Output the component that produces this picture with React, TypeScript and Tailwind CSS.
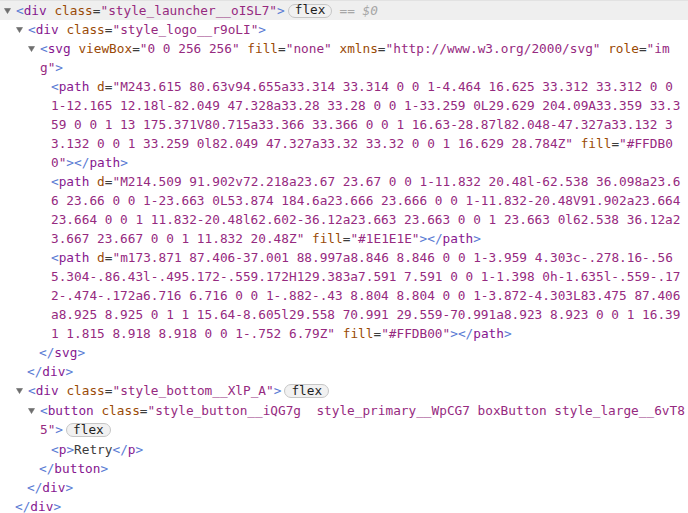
type Kind = "b" | "t" | "a" | "v" | "p";
type Tok = [string, Kind];

const color: Record<Kind, string> = {
  b: "text-[#5a7bd4]",
  t: "text-[#86178f]",
  a: "text-[#9a4a06]",
  v: "text-[#962a7f]",
  p: "text-[#3c3c3c]",
};

type Row = {
  x: number;
  toks: Tok[];
  arrow?: boolean;
  badge?: boolean;
  selected?: boolean;
  tall?: boolean;
};

const open = (tag: string, attrs: [string, string][], end = true): Tok[] => {
  const out: Tok[] = [["<", "b"], [tag, "t"]];
  attrs.forEach(([n, v]) => {
    out.push([" ", "p"], [n, "a"], ["=", "p"], [`"${v}"`, "v"]);
  });
  if (end) out.push([">", "b"]);
  return out;
};

const close = (tag: string): Tok[] => [
  ["</", "b"],
  [tag, "t"],
  [">", "b"],
];

const rows: Row[] = [
  { x: 16, arrow: true, badge: true, selected: true, tall: true, toks: open("div", [["class", "style_launcher__oISL7"]]) },
  { x: 28, arrow: true, toks: open("div", [["class", "style_logo__r9oLI"]]) },
  {
    x: 40,
    arrow: true,
    toks: [
      ["<", "b"],
      ["svg", "t"],
      [" ", "p"],
      ["viewBox", "a"],
      ["=", "p"],
      ['"0 0 256 256"', "v"],
      [" ", "p"],
      ["fill", "a"],
      ["=", "p"],
      ['"none"', "v"],
      [" ", "p"],
      ["xmlns", "a"],
      ["=", "p"],
      ['"http://www.w3.org/2000/svg"', "v"],
      [" ", "p"],
      ["role", "a"],
      ["=", "p"],
      ['"im', "v"],
    ],
  },
  { x: 40, toks: [['g"', "v"], [">", "b"]] },
  {
    x: 51,
    toks: [
      ["<", "b"],
      ["path", "t"],
      [" ", "p"],
      ["d", "a"],
      ["=", "p"],
      ['"M243.615 80.63v94.655a33.314 33.314 0 0 1-4.464 16.625 33.312 33.312 0 0', "v"],
    ],
  },
  { x: 51, toks: [["1-12.165 12.18l-82.049 47.328a33.28 33.28 0 0 1-33.259 0L29.629 204.09A33.359 33.3", "v"]] },
  { x: 51, toks: [["59 0 0 1 13 175.371V80.715a33.366 33.366 0 0 1 16.63-28.87l82.048-47.327a33.132 3", "v"]] },
  {
    x: 51,
    toks: [
      ['3.132 0 0 1 33.259 0l82.049 47.327a33.32 33.32 0 0 1 16.629 28.784Z"', "v"],
      [" ", "p"],
      ["fill", "a"],
      ["=", "p"],
      ['"#FFDB0', "v"],
    ],
  },
  { x: 51, toks: [['0"', "v"], [">", "b"], ...close("path")] },
  {
    x: 51,
    toks: [
      ["<", "b"],
      ["path", "t"],
      [" ", "p"],
      ["d", "a"],
      ["=", "p"],
      ['"M214.509 91.902v72.218a23.67 23.67 0 0 1-11.832 20.48l-62.538 36.098a23.6', "v"],
    ],
  },
  { x: 51, toks: [["6 23.66 0 0 1-23.663 0L53.874 184.6a23.666 23.666 0 0 1-11.832-20.48V91.902a23.664", "v"]] },
  { x: 51, toks: [["23.664 0 0 1 11.832-20.48l62.602-36.12a23.663 23.663 0 0 1 23.663 0l62.538 36.12a2", "v"]] },
  {
    x: 51,
    toks: [
      ['3.667 23.667 0 0 1 11.832 20.48Z"', "v"],
      [" ", "p"],
      ["fill", "a"],
      ["=", "p"],
      ['"#1E1E1E"', "v"],
      [">", "b"],
      ...close("path"),
    ],
  },
  {
    x: 51,
    toks: [
      ["<", "b"],
      ["path", "t"],
      [" ", "p"],
      ["d", "a"],
      ["=", "p"],
      ['"m173.871 87.406-37.001 88.997a8.846 8.846 0 0 1-3.959 4.303c-.278.16-.56', "v"],
    ],
  },
  { x: 51, toks: [["5.304-.86.43l-.495.172-.559.172H129.383a7.591 7.591 0 0 1-1.398 0h-1.635l-.559-.17", "v"]] },
  { x: 51, toks: [["2-.474-.172a6.716 6.716 0 0 1-.882-.43 8.804 8.804 0 0 1-3.872-4.303L83.475 87.406", "v"]] },
  { x: 51, toks: [["a8.925 8.925 0 1 1 15.64-8.605l29.558 70.991 29.559-70.991a8.923 8.923 0 0 1 16.39", "v"]] },
  {
    x: 51,
    toks: [
      ['1 1.815 8.918 8.918 0 0 1-.752 6.79Z"', "v"],
      [" ", "p"],
      ["fill", "a"],
      ["=", "p"],
      ['"#FFDB00"', "v"],
      [">", "b"],
      ...close("path"),
    ],
  },
  { x: 39, toks: close("svg") },
  { x: 27, toks: close("div") },
  { x: 28, arrow: true, badge: true, tall: true, toks: open("div", [["class", "style_bottom__XlP_A"]]) },
  {
    x: 40,
    arrow: true,
    toks: [
      ["<", "b"],
      ["button", "t"],
      [" ", "p"],
      ["class", "a"],
      ["=", "p"],
      ['"style_button__iQG7g  style_primary__WpCG7 boxButton style_large__6vT8', "v"],
    ],
  },
  { x: 40, badge: true, tall: true, toks: [['5"', "v"], [">", "b"]] },
  { x: 51, toks: [["<", "b"], ["p", "t"], [">", "b"], ["Retry", "p"], ...close("p")] },
  { x: 39, toks: close("button") },
  { x: 27, toks: close("div") },
  { x: 15, toks: close("div") },
];

function Arrow() {
  return (
    <svg width="7" height="6" viewBox="0 0 7 6" className="shrink-0">
      <path d="M0.5 0.5h6L3.5 5.5Z" fill="#6e6e6e" stroke="#6e6e6e" strokeWidth="0.6" strokeLinejoin="round" />
    </svg>
  );
}

function Line({ row }: { row: Row }) {
  return (
    <div
      className={`relative flex items-center whitespace-pre ${row.tall ? "h-[20px]" : "h-[19px]"} ${
        row.selected ? "bg-[#efefef] border-t border-[#e2e2e2]" : ""
      }`}
      style={{ paddingLeft: row.x }}
    >
      {row.arrow && (
        <span className="absolute top-0 bottom-0 flex items-center" style={{ left: row.x - 12 }}>
          <Arrow />
        </span>
      )}
      {row.toks.map(([s, k], i) => (
        <span key={i} className={color[k]}>
          {s}
        </span>
      ))}
      {row.badge && (
        <span className="ml-[3px] flex h-[14px] items-center rounded-full border border-[#c6c6c6] bg-[#f1f1f1] px-[6px] text-[#1f1f1f] leading-none">
          flex
        </span>
      )}
      {row.selected && <span className="ml-[7px] italic text-[#a6a6a6]">== $0</span>}
    </div>
  );
}

export default function App() {
  return (
    <div className="h-[513px] w-[688px] overflow-hidden bg-white font-['DejaVu_Sans_Mono','Liberation_Mono',monospace] text-[12.75px]">
      {rows.map((r, i) => (
        <Line key={i} row={r} />
      ))}
    </div>
  );
}
